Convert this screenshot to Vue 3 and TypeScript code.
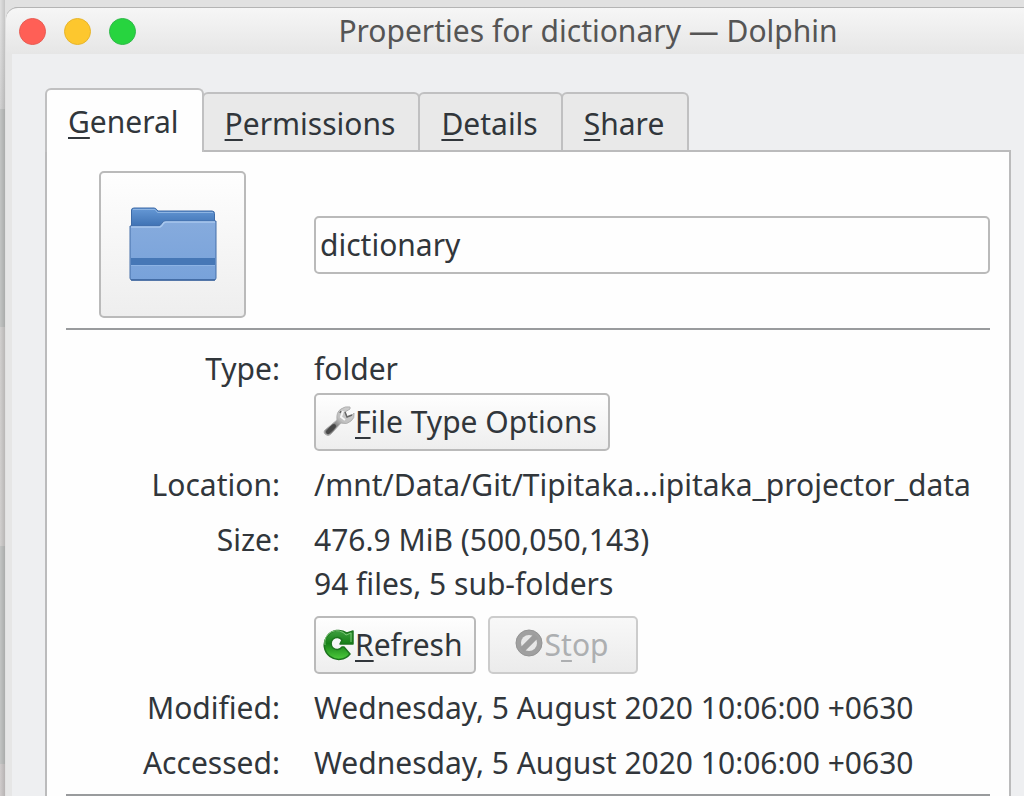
<script setup lang="ts">
import { ref } from 'vue'

interface Tab {
  key: string
  rest: string
}

const tabs: Tab[] = [
  { key: 'G', rest: 'eneral' },
  { key: 'P', rest: 'ermissions' },
  { key: 'D', rest: 'etails' },
  { key: 'S', rest: 'hare' },
]
const active = ref(0)
const name = ref('dictionary')
</script>

<template>
  <div class="desktop">
    <main class="window">
      <header class="titlebar">
        <div class="controls">
          <button class="control close" type="button" aria-label="Close"></button>
          <button class="control minimize" type="button" aria-label="Minimize"></button>
          <button class="control maximize" type="button" aria-label="Maximize"></button>
        </div>
        <h1 class="title">Properties for dictionary — Dolphin</h1>
      </header>

      <div class="content">
        <div class="tabs" role="tablist">
          <button
            v-for="(tab, i) in tabs"
            :key="tab.key"
            class="tab"
            :class="{ active: i === active }"
            type="button"
            role="tab"
            :aria-selected="i === active"
            @click="active = i"
          ><u>{{ tab.key }}</u>{{ tab.rest }}</button>
        </div>

        <section class="panel" role="tabpanel">
          <div class="identity">
            <button class="button icon-button" type="button" aria-label="Change icon">
              <svg width="88" height="76" viewBox="0 0 88 76" aria-hidden="true">
                <defs>
                  <linearGradient id="back" x1="0" y1="0" x2="0" y2="1">
                    <stop offset="0" stop-color="#6699d6" />
                    <stop offset="1" stop-color="#3d70b2" />
                  </linearGradient>
                  <linearGradient id="front" x1="0" y1="0" x2="0" y2="1">
                    <stop offset="0" stop-color="#86abdd" />
                    <stop offset="1" stop-color="#78a2da" />
                  </linearGradient>
                </defs>
                <path d="M2.500 20V3Q2.500 1 5 1H25Q27 1 28 3L29 4H83Q85.500 4 85.500 6.500V20Z" fill="url(#back)" stroke="#3e6ba7" />
                <path d="M4 2.500H26L28.500 5.500H84" fill="none" stroke="#8db4e2" />
                <path d="M1 19H30Q32 18 33 16Q34 14 36 14H87V71Q87 73 85 73H3Q1 73 1 71Z" fill="url(#front)" stroke="#456fa8" />
                <path d="M2 20H31Q33 19 34 17Q35 15 37 15H86" fill="none" stroke="#a9c8ee" stroke-width="1.500" />
                <path d="M2 51H86V58H2Z" fill="#4677b6" />
                <path d="M2 58.500H86" stroke="#8db3e4" />
                <path d="M2 73H86" stroke="#3c659d" stroke-width="1.500" />
              </svg>
            </button>
            <input v-model="name" class="name" type="text" aria-label="Name" />
          </div>

          <hr class="rule" />

          <dl class="details">
            <dt>Type:</dt>
            <dd>
              <div>folder</div>
              <button class="button type-button" type="button">
                <svg width="32" height="32" viewBox="0 0 32 32" aria-hidden="true">
                  <defs>
                    <linearGradient id="steel" x1="0" y1="1" x2="1" y2="0">
                      <stop offset="0" stop-color="#a0a0a0" />
                      <stop offset="0.250" stop-color="#5c5c5c" />
                      <stop offset="0.550" stop-color="#c0c0c0" />
                      <stop offset="1" stop-color="#d0d0d0" />
                    </linearGradient>
                  </defs>
                  <path d="M2 24L14 14Q13 6 18 3Q22 0 27 1L27 3L22 6L24 11L29 9L31 7Q32 12 28 15Q24 19 18 17L8 28Q5 31 2 28Q0 26 2 24Z" fill="url(#steel)" stroke="#b0b0b0" />
                  <path d="M5 26L11 20" stroke="#484848" stroke-width="4" stroke-linecap="round" />
                  <path d="M22 6L24 11L29 9M17 7L18 5" fill="none" stroke="#666666" stroke-width="1.500" />
                  <path d="M20 5L18 11L22 14" fill="none" stroke="#f5f5f5" stroke-width="2" />
                </svg>
                <span><u>F</u>ile Type Options</span>
              </button>
            </dd>

            <dt>Location:</dt>
            <dd>/mnt/Data/Git/Tipitaka...ipitaka_projector_data</dd>

            <dt>Size:</dt>
            <dd>
              <div>476.9 MiB (500,050,143)</div>
              <div>94 files, 5 sub-folders</div>
              <div class="actions">
                <button class="button" type="button">
                  <svg width="32" height="32" viewBox="0 0 32 32" aria-hidden="true">
                    <defs>
                      <linearGradient id="leaf" x1="0" y1="0" x2="0" y2="1">
                        <stop offset="0" stop-color="#3f9f40" />
                        <stop offset="0.450" stop-color="#168117" />
                        <stop offset="1" stop-color="#4ecb3c" />
                      </linearGradient>
                    </defs>
                    <path d="M24 4L30 2V15H17L19 11A6 6 0 1 0 19 18L21 18L27 25A14.500 14.500 0 1 1 24 4Z" fill="url(#leaf)" stroke="#1d741e" stroke-width="1.500" stroke-linejoin="round" />
                    <path d="M2 16A12 12 0 0 1 23 6L28 4V13" fill="none" stroke="#7cc777" />
                  </svg>
                  <span><u>R</u>efresh</span>
                </button>
                <button class="button stop" type="button" disabled>
                  <svg width="32" height="32" viewBox="0 0 32 32" aria-hidden="true">
                    <circle cx="16" cy="14" r="13" fill="#a0a0a0" stroke="#949494" />
                    <circle cx="16" cy="14" r="8" fill="#e8e8e8" />
                    <path d="M9 21L23 7" stroke="#9c9c9c" stroke-width="6" />
                  </svg>
                  <span>S<u>t</u>op</span>
                </button>
              </div>
            </dd>

            <dt>Modified:</dt>
            <dd>Wednesday, 5 August 2020 10:06:00 +0630</dd>

            <dt>Accessed:</dt>
            <dd>Wednesday, 5 August 2020 10:06:00 +0630</dd>
          </dl>

          <hr class="rule" />
        </section>
      </div>
    </main>
  </div>
</template>

<style>
body {
  margin: 0;
  overflow: hidden;
}
</style>

<style scoped>
* {
  box-sizing: border-box;
}

.desktop {
  display: flex;
  min-height: 100vh;
  padding: 7px 0 0 6px;
  background:
    linear-gradient(to right, transparent, rgba(0, 0, 0, 0.15) 6px),
    linear-gradient(#e0e0e0 20px, #d2d2d2 109px, #c2c4c3 109px 327px, #d2d0cf 327px 546px, #c2c4c3 546px 764px, #d0cccc 764px);
  font-family: "Noto Sans", sans-serif;
  font-size: 30px;
  line-height: 44px;
  color: #31363b;
}

.window {
  flex: 1;
  display: flex;
  flex-direction: column;
  min-width: 0;
  padding-left: 6px;
  border-top: 1px solid #b4b4b4;
  border-top-left-radius: 12px;
  background: linear-gradient(#f6f6f6, #e6e6e6 46px);
  box-shadow: 0 -8px 0 8px #e1e1e1, 0 0 3px #888888;
  clip-path: inset(-7px 0 0 -1px);
}

.titlebar {
  display: flex;
  align-items: center;
  height: 46px;
  padding-left: 7px;
}

.controls {
  display: flex;
  gap: 18px;
}

.control {
  width: 27px;
  height: 27px;
  padding: 0;
  border: 1px solid #e85c53;
  border-radius: 50%;
  background: #ff5f56;
}

.minimize {
  border-color: #e7b52b;
  background: #fdc72e;
}

.maximize {
  border-color: #2fb94a;
  background: #27d43f;
}

.title {
  flex: 1;
  margin: 0;
  padding-left: 16px;
  font-size: 30px;
  font-weight: 400;
  text-align: center;
  color: #555555;
}

.content {
  flex: 1;
  display: flex;
  flex-direction: column;
  padding: 34px 13px 0 33px;
  background: #eeeff1;
}

.tabs {
  display: flex;
  align-items: flex-end;
  margin-bottom: -2px;
}

.tab {
  height: 60px;
  margin: 0 0 0 -2px;
  padding: 4px 23px 0 21px;
  border: 2px solid #c0c0c1;
  border-bottom-color: #bbbbbc;
  border-radius: 6px 6px 0 0;
  background: #e9e9e9;
  font: inherit;
  color: inherit;
}

.tab.active {
  z-index: 1;
  height: 64px;
  margin: 0;
  padding: 2px 23px 0 21px;
  border-bottom: 0;
  background: #fefefe;
}

u {
  text-decoration: underline;
  text-decoration-thickness: 2px;
  text-underline-offset: 4px;
  text-decoration-skip-ink: none;
}

.panel {
  flex: 1;
  padding: 19px 19px 0;
  border: 2px solid #bbbbbc;
  border-bottom: 0;
  background: #fefefe;
}

.identity {
  display: flex;
  align-items: center;
  gap: 68px;
  margin-bottom: 10px;
  padding-left: 33px;
}

.button {
  display: inline-flex;
  align-items: center;
  justify-content: center;
  height: 58px;
  padding: 0 11px 0 7px;
  border: 2px solid #bababa;
  border-radius: 5px;
  background: linear-gradient(#fefefe, #eeeeee);
  font: inherit;
  color: inherit;
}

.icon-button {
  width: 147px;
  height: 147px;
  padding: 0;
}

.name {
  flex: 1;
  min-width: 0;
  height: 58px;
  padding: 0 4px;
  border: 2px solid #bababa;
  border-radius: 5px;
  background: #fefefe;
  font: inherit;
  color: inherit;
}

.rule {
  height: 2px;
  margin: 9px 0 0;
  border: 0;
  background: #999b9d;
}

.details {
  display: grid;
  grid-template-columns: 214px 1fr;
  gap: 11px 34px;
  margin: 17px 0 0;
}

dt {
  text-align: right;
}

dd {
  margin: 0;
  white-space: nowrap;
}

.type-button {
  display: flex;
  margin: 2px 0 1px;
}

.actions {
  display: flex;
  gap: 12px;
  margin: 10px 0 1px;
}

.stop {
  width: 150px;
  border-color: #cccccc;
  background: linear-gradient(#f8f8f8, #ebebeb);
  color: #adafb1;
}
</style>
